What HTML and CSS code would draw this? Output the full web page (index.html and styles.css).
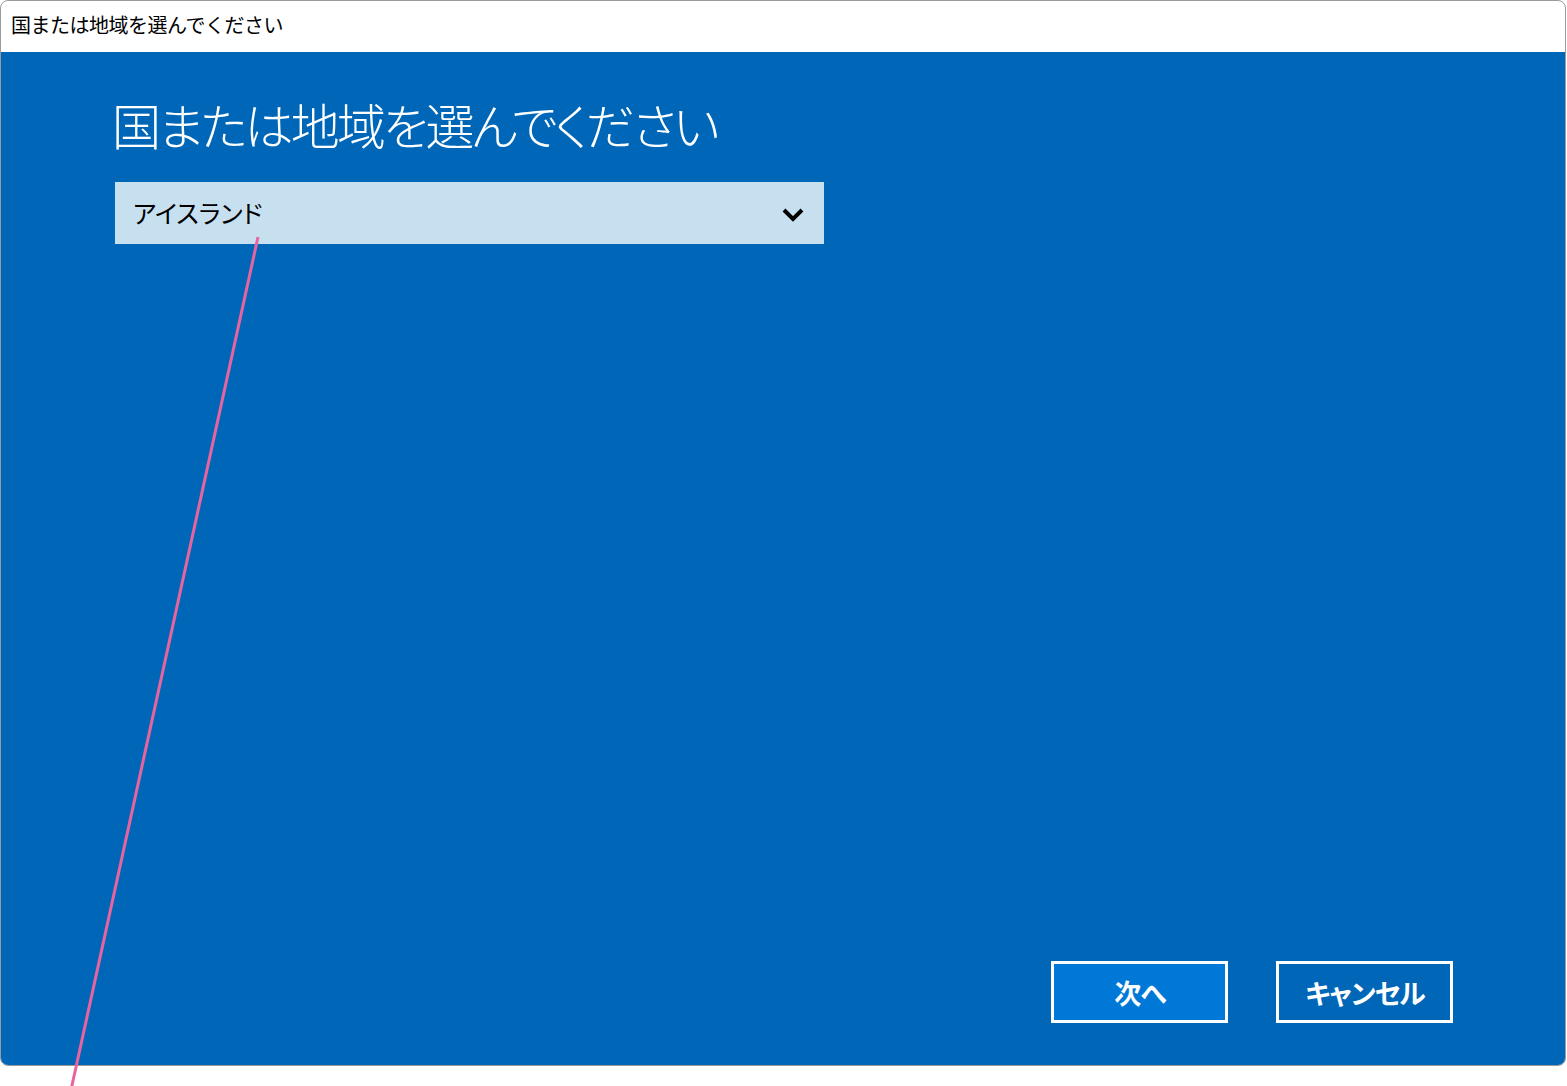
FILE: index.html
```html
<!DOCTYPE html>
<html lang="ja">
<head>
<meta charset="utf-8">
<title>国または地域を選んでください</title>
<link rel="stylesheet" href="styles.css">
</head>
<body>
<div class="window">
  <div class="titlebar">国または地域を選んでください</div>
  <div class="content">
    <h1 class="heading">国または地域を選んでください</h1>
    <div class="select">
      <span class="select-value">アイスランド</span>
      <svg class="chevron" width="22" height="16" viewBox="0 0 22 16"><path d="M2 3 L11 12 L20 3" fill="none" stroke="#000" stroke-width="4"/></svg>
    </div>
    <div class="actions">
      <button class="btn btn-primary">次へ</button>
      <button class="btn">キャンセル</button>
    </div>
  </div>
</div>
<svg class="callout" width="1567" height="1086" viewBox="0 0 1567 1086"><line x1="258" y1="237" x2="71" y2="1090" stroke="#e8649f" stroke-width="3"/></svg>
</body>
</html>
```
FILE: styles.css
```css
* { box-sizing: border-box; }
html, body { margin: 0; padding: 0; background: #fff; }
body {
  width: 1567px;
  height: 1086px;
  position: relative;
  overflow: hidden;
  font-family: "Noto Sans CJK JP", "Noto Sans", sans-serif;
}
.window {
  width: 1566px;
  height: 1066px;
  border: 1px solid #9a9a9a;
  border-radius: 8px;
  overflow: hidden;
  display: flex;
  flex-direction: column;
  background: #fff;
}
.titlebar {
  height: 51px;
  flex: none;
  padding-left: 10px;
  font-size: 20px;
  letter-spacing: -0.5px;
  line-height: 48px;
  color: #000;
}
.content {
  flex: 1;
  background: #0067b8;
  display: flex;
  flex-direction: column;
  padding: 0 112px 42px 114px;
}
.heading {
  margin: 36px 0 0 -3px;
  font-size: 49px;
  font-weight: 300;
  font-feature-settings: "palt";
  letter-spacing: -2.8px;
  line-height: 72px;
  color: #fff;
}
.select {
  margin-top: 22px;
  width: 709px;
  height: 62px;
  background: #c7e0f0;
  display: flex;
  align-items: center;
  justify-content: space-between;
  padding: 0 20px 0 18px;
}
.select-value {
  font-size: 25px;
  font-feature-settings: "palt";
  color: #000;
  margin-top: -2px;
}
.chevron { margin-top: 4px; }
.actions {
  margin-top: auto;
  display: flex;
  justify-content: flex-end;
  gap: 48px;
}
.btn {
  width: 177px;
  height: 62px;
  border: 3px solid #fff;
  background: #0067b8;
  color: #fff;
  font-family: "Noto Sans CJK JP", sans-serif;
  font-size: 27px;
  font-weight: 700;
  font-feature-settings: "palt";
  letter-spacing: -1px;
  padding: 0 0 0 1px;
}
.btn-primary { background: #0078d7; }
.callout {
  position: absolute;
  left: 0;
  top: 0;
  pointer-events: none;
}
```
